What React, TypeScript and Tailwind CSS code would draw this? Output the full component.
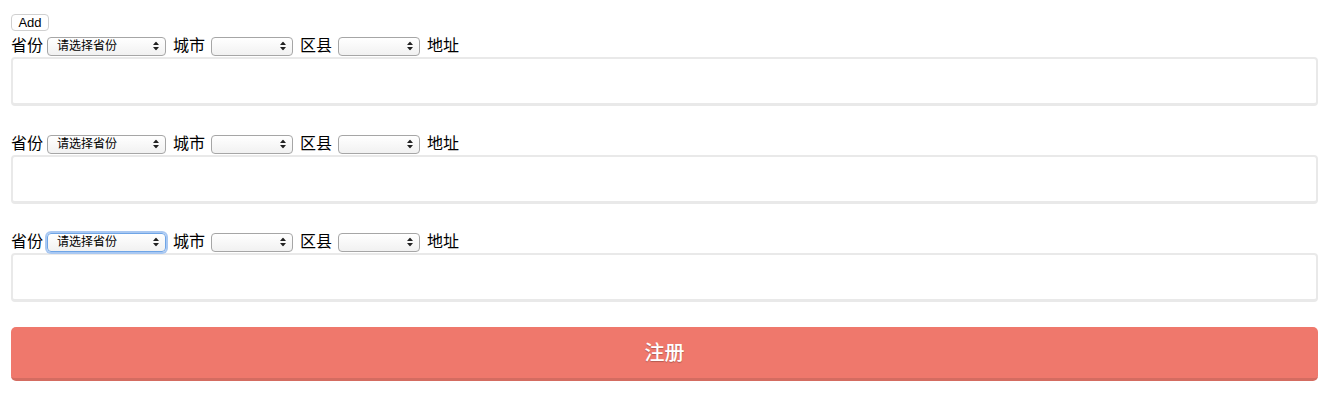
import React from "react";

const font = { fontFamily: '"Helvetica Neue", "Liberation Sans", "Noto Sans CJK SC", sans-serif' };

function Arrows() {
  return (
    <svg width="6" height="9" viewBox="0 0 6 9" className="absolute right-[6px] top-1/2 -translate-y-1/2">
      <path d="M3 0 L6 3.5 L0 3.5 Z" fill="#222" />
      <path d="M3 9 L6 5.5 L0 5.5 Z" fill="#222" />
    </svg>
  );
}

function FakeSelect({ w, text, focus }: { w: string; text?: string; focus?: boolean }) {
  return (
    <div
      className={`relative h-[19px] ${w} rounded-[4px] border bg-gradient-to-b from-white to-[#f1f1f1] ${
        focus
          ? "border-[#6fa5e6] shadow-[0_0_0_2px_#a9c8f2]"
          : "border-[#a6a6a6]"
      }`}
    >
      <span className="absolute left-[9px] top-[0px] text-[12px] leading-[17px] text-black">{text}</span>
      <Arrows />
    </div>
  );
}

function Row({ focus }: { focus?: boolean }) {
  return (
    <div>
      <div className="flex h-[20px] items-center text-[16px] leading-[20px] text-black">
        <span>省份</span>
        <div className="ml-[4px]">
          <FakeSelect w="w-[119px]" text="请选择省份" focus={focus} />
        </div>
        <span className="ml-[7px]">城市</span>
        <div className="ml-[6px]">
          <FakeSelect w="w-[82px]" />
        </div>
        <span className="ml-[7px]">区县</span>
        <div className="ml-[6px]">
          <FakeSelect w="w-[82px]" />
        </div>
        <span className="ml-[7px]">地址</span>
      </div>
      <div className="mt-[1px] h-[49px] w-[1307px] rounded-[4px] border-2 border-b-[3px] border-[#e9e9e9] bg-white" />
    </div>
  );
}

export default function App() {
  return (
    <div className="min-h-[400px] bg-white px-[11px] pt-[14px]" style={font}>
      <div className="h-[17px] w-[38px] rounded-[4px] border border-[#d0d0d0] bg-white text-center text-[13px] leading-[15px] text-black">
        Add
      </div>
      <div className="mt-[5px] flex flex-col gap-[28px]">
        <Row />
        <Row />
        <Row focus />
      </div>
      <div className="mt-[25px] flex h-[54px] w-[1307px] items-center justify-center rounded-[5px] border-b-[3px] border-[#d46c61] bg-[#ef786c] text-[20px] font-medium text-white [text-shadow:0_1px_1px_rgba(0,0,0,0.25)]">
        注册
      </div>
    </div>
  );
}
